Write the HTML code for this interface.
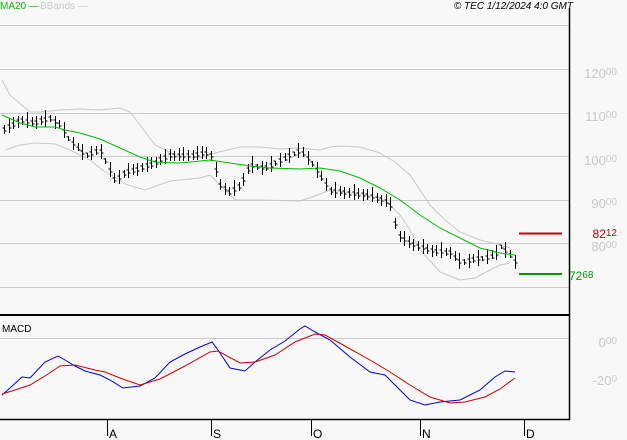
<!DOCTYPE html>
<html><head><meta charset="utf-8"><style>
html,body{margin:0;padding:0;background:#f8f8f8;}
svg{display:block;font-family:"Liberation Sans",sans-serif;}
.lb{fill:#c8c8c8;font-size:13px;}
.sm{font-size:10px;}
</style></head><body>
<svg id="s" width="627" height="440" xmlns="http://www.w3.org/2000/svg">
<rect width="627" height="440" fill="#f8f8f8"/>
<g stroke="#cccccc" stroke-width="1">
<line x1="0" x2="569" y1="25.5" y2="25.5"/>
<line x1="0" x2="569" y1="69.5" y2="69.5"/>
<line x1="0" x2="569" y1="113.5" y2="113.5"/>
<line x1="0" x2="569" y1="156.5" y2="156.5"/>
<line x1="0" x2="569" y1="200.5" y2="200.5"/>
<line x1="0" x2="569" y1="243.5" y2="243.5"/>
<line x1="0" x2="569" y1="287.5" y2="287.5"/>
<line x1="0" x2="569" y1="338.5" y2="338.5"/>
</g>
<g fill="none" stroke="#c8c8c8" stroke-width="1">
<polyline points="2,80 10,95 30,112 40,112 60,110 80,109 100,110 120,108 130,112 140,125 155,145 175,155 200,158 215,153 240,147 260,147 280,149 300,148 320,150 330,147 340,146 360,147 380,153 395,162 410,175 420,190 430,205 445,220 460,232 480,240 500,245 510,248"/>
<polyline points="5,150 20,145 35,143 55,144 70,150 90,160 105,172 115,177 125,184 145,190 170,181 200,178 210,175 220,185 235,200 260,200 300,201 315,196 330,190 360,194 380,198 390,205 400,215 410,230 420,250 440,272 460,280 475,278 490,270 500,265 510,263"/>
</g>
<path id="bars" fill="none" stroke="#000" stroke-width="1" d=""/>
<polyline fill="none" stroke="#00bb00" stroke-width="1" points="2,115 20,123 35,127 55,127 65,130 80,133 100,139 120,148 140,157 155,162 180,163 210,160 230,163 250,166 270,168 300,169 320,168 340,171 360,178 380,188 400,200 420,215 440,228 460,238 480,248 500,253 515,255"/>
<line x1="519" x2="562" y1="233.5" y2="233.5" stroke="#cc0000" stroke-width="2"/>
<line x1="519" x2="562" y1="274" y2="274" stroke="#009900" stroke-width="2"/>
<polyline fill="none" stroke="#0000cc" stroke-width="1" points="2,395 10,388 22,377 30,378 45,362 58,356 65,360 75,366 85,371 100,375 110,380 123,388 140,386 155,378 170,362 185,354 200,347 212,342 218,350 230,368 245,371 255,362 270,350 285,341 300,329 305,326 315,332 330,340 350,357 370,372 385,375 395,385 410,400 425,405 440,402 460,400 480,390 495,377 505,371 515,372"/>
<polyline fill="none" stroke="#cc0000" stroke-width="1" points="2,394 15,390 30,385 45,376 60,366 75,365 95,370 105,372 120,378 140,385 160,379 185,366 210,352 218,351 240,363 255,362 275,355 295,342 315,334 325,335 345,346 370,360 390,372 410,385 430,397 450,403 465,402 485,397 500,389 515,378"/>
<line x1="569.5" x2="569.5" y1="8" y2="420" stroke="#000" stroke-width="1.5"/>
<line x1="0" x2="570" y1="315" y2="315" stroke="#000" stroke-width="2"/>
<line x1="0" x2="570" y1="419.5" y2="419.5" stroke="#000" stroke-width="1.5"/>
<g stroke="#000" stroke-width="1">
<line x1="107.5" x2="107.5" y1="420" y2="436"/>
<line x1="211.5" x2="211.5" y1="420" y2="436"/>
<line x1="311.5" x2="311.5" y1="420" y2="436"/>
<line x1="420.5" x2="420.5" y1="420" y2="436"/>
<line x1="524.5" x2="524.5" y1="420" y2="436"/>
</g>
<g font-size="12" fill="#000">
<text x="109" y="438">A</text><text x="213" y="438">S</text><text x="313" y="438">O</text><text x="422" y="438">N</text><text x="526" y="438">D</text>
<text x="2" y="332" font-size="10">MACD</text>
</g>
<text x="0" y="9" font-size="10" fill="#00bb00">MA20 —</text>
<text x="40" y="9" font-size="10" fill="#c8c8c8">BBands —</text>
<text x="573" y="9" font-size="10" font-style="italic" fill="#000" text-anchor="end">© TEC 1/12/2024 4:0 GMT</text>
<g text-anchor="end">
<text class="lb" x="617" y="78">120<tspan class="sm" dy="-3">00</tspan></text>
<text class="lb" x="617" y="121">110<tspan class="sm" dy="-3">00</tspan></text>
<text class="lb" x="617" y="165">100<tspan class="sm" dy="-3">00</tspan></text>
<text class="lb" x="617" y="208">90<tspan class="sm" dy="-3">00</tspan></text>
<text class="lb" x="617" y="251">80<tspan class="sm" dy="-3">00</tspan></text>
<text class="lb" x="617" y="347">0<tspan class="sm" dy="-3">00</tspan></text>
<text class="lb" x="617" y="385">-20<tspan class="sm" dy="-3">0</tspan></text>
<text x="617" y="238" font-size="12" fill="#cc0000">82<tspan font-size="10" dy="-2">12</tspan></text>
</g>
<text x="569" y="280" font-size="12" fill="#009900">72<tspan font-size="10" dy="-2">68</tspan></text>
</svg>
<script>
var pts=[[5,128],[20,120],[35,122],[50,118],[60,125],[70,140],[85,155],[100,150],[115,180],[125,172],[140,168],[155,162],[170,155],[190,155],[210,152],[220,185],[230,192],[240,185],[250,165],[265,168],[280,160],[300,150],[310,160],[320,175],[330,190],[350,193],[370,195],[390,203],[398,235],[410,243],[430,250],[450,252],[460,262],[480,258],[495,255],[500,245],[510,255],[515,262]];
function f(x){for(var i=0;i<pts.length-1;i++){if(x<=pts[i+1][0]){var a=pts[i],b=pts[i+1];return a[1]+(b[1]-a[1])*(x-a[0])/(b[0]-a[0]);}}return pts[pts.length-1][1];}
var d="";
for(var x=4;x<=515;x+=4.6){var c=f(x);var r=Math.abs(Math.sin(x*1.7))*9+6;var t=c-r/2-Math.sin(x)*2,bo=c+r/2;var xx=Math.round(x)+0.5;
d+="M"+xx+" "+t.toFixed(0)+"V"+bo.toFixed(0)+"M"+(xx-2)+" "+(c-1).toFixed(0)+"H"+xx+"M"+xx+" "+(c+2).toFixed(0)+"H"+(xx+2);}
document.getElementById("bars").setAttribute("d",d);
</script>
</body></html>
